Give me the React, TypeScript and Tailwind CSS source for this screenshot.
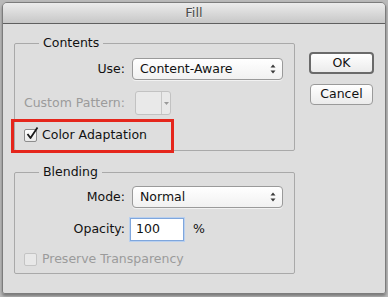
import React from "react";

const font = "font-['DejaVu_Sans',sans-serif]";

function Arrows() {
  return (
    <svg width="6" height="10" viewBox="0 0 6 10" className="shrink-0">
      <path d="M0.5 3.5 L3 0.5 L5.5 3.5 Z" fill="#3a3a3a" />
      <path d="M0.5 6.5 L3 9.5 L5.5 6.5 Z" fill="#3a3a3a" />
    </svg>
  );
}

function Popup({ value }: { value: string }) {
  return (
    <div className="ml-[7px] w-[151px] h-[22px] flex items-center justify-between pl-[7px] pr-[6px] rounded-[4px] border border-[#9a9a9a] bg-gradient-to-b from-[#ffffff] to-[#f1f1f1] shadow-[0_1px_0_rgba(255,255,255,0.6)]">
      <span className="text-[12.5px] text-[#111]">{value}</span>
      <Arrows />
    </div>
  );
}

function Checkbox({ checked, disabled }: { checked?: boolean; disabled?: boolean }) {
  return (
    <div className="relative w-[13px] h-[13px] shrink-0">
      <div
        className={
          disabled
            ? "w-[13px] h-[13px] rounded-[2px] border border-[#c4c4c4] bg-[#e8e8e8]"
            : "w-[13px] h-[13px] rounded-[2px] border border-[#8d8d8d] bg-gradient-to-b from-[#ffffff] to-[#e9e9e9]"
        }
      />
      {checked && (
        <svg width="16" height="16" viewBox="0 0 16 16" className="absolute left-[1px] top-[-4px]">
          <path d="M2.5 9 L5.5 13 L12.5 2.5" fill="none" stroke="#1a1a1a" strokeWidth="1.8" strokeLinejoin="round" />
        </svg>
      )}
    </div>
  );
}

function Label({ children, muted }: { children: React.ReactNode; muted?: boolean }) {
  return (
    <div
      className={
        "w-[101px] shrink-0 flex justify-end whitespace-nowrap text-[12.5px] " +
        (muted ? "text-[#9b9b9b]" : "text-[#111]")
      }
    >
      <span className="shrink-0">{children}</span>
    </div>
  );
}

export default function App() {
  return (
    <div className={"w-[388px] h-[297px] bg-[#b9b9b9] pt-[2px] pl-[2px] " + font}>
      <div className="relative w-[384px] h-[292px] flex flex-col rounded-t-[5px] rounded-b-[3px] border border-[#7c7c7c] overflow-hidden shadow-[0_2px_3px_rgba(0,0,0,0.35)]">
        {/* title bar */}
        <div className="h-[21px] shrink-0 flex items-center justify-center border-b border-[#5f5f5f] bg-gradient-to-b from-[#ececec] to-[#c7c7c7]">
          <span className="text-[13px] text-[#4a4a4a] [text-shadow:0_1px_0_rgba(255,255,255,0.7)]">Fill</span>
        </div>

        {/* body */}
        <div className="flex-1 flex bg-[#dedede] pl-[11px] pt-[11px]">
          <div className="w-[281px] flex flex-col">
            <fieldset className="border border-[#a9a9a9] rounded-[2px] pl-[9px] pb-[7px]">
              <legend className="ml-[15px] px-[4px] leading-[16px] text-[12.5px] text-[#111]">Contents</legend>
              <div className="mt-[7px] h-[22px] flex items-center">
                <Label>Use:</Label>
                <Popup value="Content-Aware" />
              </div>
              <div className="mt-[11px] h-[24px] flex items-center">
                <Label muted>Custom Pattern:</Label>
                <div className="ml-[10px] w-[36px] h-[24px] flex rounded-[3px] border border-[#c2c2c2] bg-[#e9e9e9]">
                  <div className="w-[26px] border-r border-[#c8c8c8]" />
                  <div className="flex-1 flex items-center justify-center">
                    <svg width="5" height="3" viewBox="0 0 5 3">
                      <path d="M0 0 L5 0 L2.5 3 Z" fill="#9a9a9a" />
                    </svg>
                  </div>
                </div>
              </div>
              <div className="mt-[12px] h-[16px] flex items-center">
                <Checkbox checked />
                <span className="ml-[5px] text-[12.5px] text-[#111]">Color Adaptation</span>
              </div>
            </fieldset>

            <fieldset className="mt-[13px] border border-[#a9a9a9] rounded-[2px] pl-[9px] pb-[6px]">
              <legend className="ml-[15px] px-[4px] leading-[16px] text-[12.5px] text-[#111]">Blending</legend>
              <div className="mt-[6px] h-[22px] flex items-center">
                <Label>Mode:</Label>
                <Popup value="Normal" />
              </div>
              <div className="mt-[10px] h-[23px] flex items-center">
                <Label>Opacity:</Label>
                <div className="ml-[5px] w-[54px] h-[23px] flex items-center pl-[5px] border border-[#7fa6dc] bg-white shadow-[0_0_0_1px_#b9d0ef]">
                  <span className="text-[12.5px] text-[#111]">100</span>
                </div>
                <span className="ml-[9px] text-[12.5px] text-[#111]">%</span>
              </div>
              <div className="mt-[10px] h-[16px] flex items-center">
                <Checkbox disabled />
                <span className="ml-[5px] text-[12.5px] text-[#9b9b9b]">Preserve Transparency</span>
              </div>
            </fieldset>
          </div>

          <div className="ml-[14px] mt-[17px] flex flex-col">
            <button className="w-[65px] h-[22px] rounded-[4px] border-2 border-[#6a6a6a] bg-gradient-to-b from-[#ffffff] to-[#ebebeb] text-[12.5px] text-[#111] leading-none">
              OK
            </button>
            <button className="mt-[10px] ml-[1px] w-[63px] h-[21px] rounded-[4px] border border-[#9a9a9a] bg-gradient-to-b from-[#ffffff] to-[#ebebeb] text-[12.5px] text-[#111] leading-none">
              Cancel
            </button>
          </div>
        </div>

        {/* annotation */}
        <div className="absolute left-[8px] top-[116px] w-[163px] h-[34px] border-[3px] border-[#e5261c]" />
      </div>
    </div>
  );
}
